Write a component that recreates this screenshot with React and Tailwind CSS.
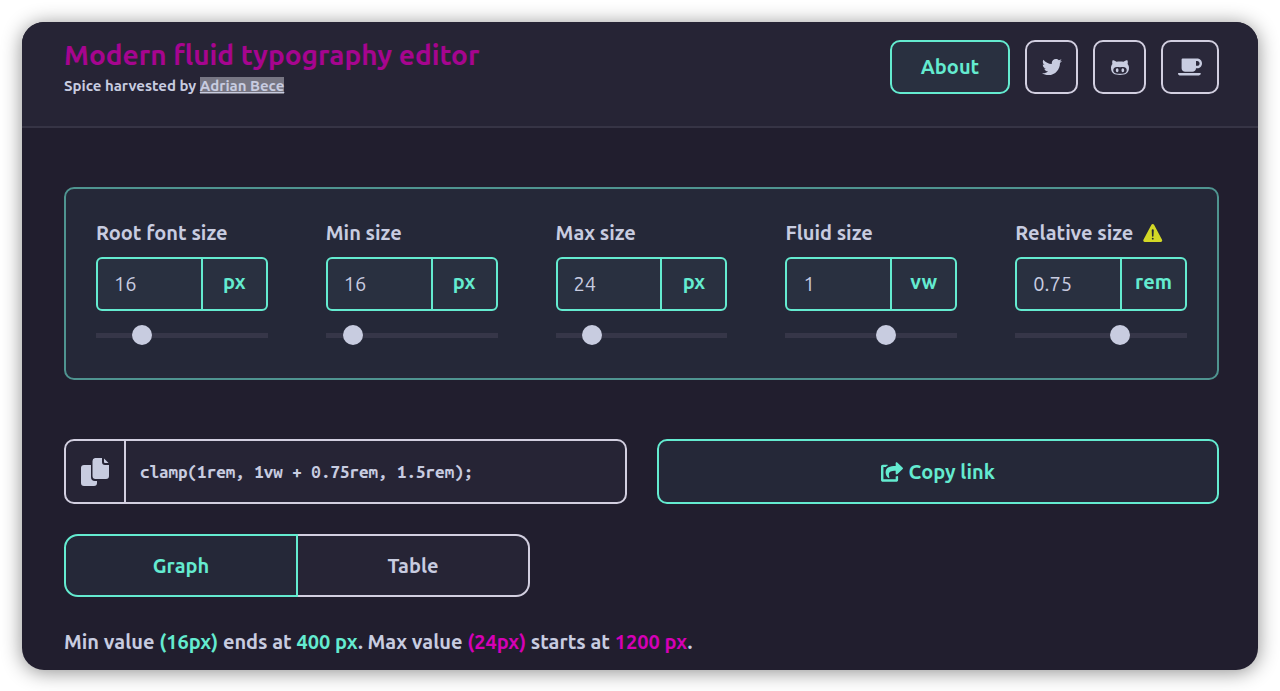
import { useState } from 'react';
import { FaTwitter, FaCoffee, FaShareSquare } from 'react-icons/fa';
import { IoWarning } from 'react-icons/io5';

const fields = [
  { id: 'root', label: 'Root font size', unit: 'px', value: 16, min: 1, max: 64 },
  { id: 'min', label: 'Min size', unit: 'px', value: 16, min: 1, max: 131 },
  { id: 'max', label: 'Max size', unit: 'px', value: 24, min: 1, max: 131 },
  { id: 'fluid', label: 'Fluid size', unit: 'vw', value: 1, min: -5, max: 5 },
  { id: 'relative', label: 'Relative size', unit: 'rem', value: 0.75, min: -3, max: 3, warning: true },
];

const OctofaceIcon = () => (
  <svg width="18" height="18" viewBox="0 0 16 16" fill="currentColor" aria-hidden="true">
    <path d="M14.7 5.34c.13-.32.55-1.59-.13-3.31 0 0-1.05-.33-3.44 1.3-1-.28-2.07-.32-3.13-.32s-2.13.04-3.13.32c-2.39-1.64-3.44-1.3-3.44-1.3-.68 1.72-.26 2.99-.13 3.31C.49 6.21 0 7.33 0 8.69 0 13.84 3.33 15 7.98 15S16 13.84 16 8.69c0-1.36-.49-2.48-1.3-3.35zM8 14.02c-3.3 0-5.98-.15-5.98-3.35 0-.76.38-1.48 1.02-2.07 1.07-.98 2.9-.46 4.96-.46 2.07 0 3.88-.52 4.96.46.65.59 1.02 1.3 1.02 2.07 0 3.19-2.68 3.35-5.98 3.35zM5.49 9.01c-.66 0-1.2.8-1.2 1.78s.54 1.79 1.2 1.79c.66 0 1.2-.8 1.2-1.79s-.54-1.78-1.2-1.78zm5.02 0c-.66 0-1.2.79-1.2 1.78s.54 1.79 1.2 1.79c.66 0 1.2-.8 1.2-1.79s-.53-1.78-1.2-1.78z" />
  </svg>
);

const CopyIcon = () => (
  <svg width="30" height="30" viewBox="0 0 30 30" fill="currentColor" aria-hidden="true">
    <path d="M4 8h7v12a4 4 0 0 0 4 4h2v2a3 3 0 0 1-3 3H4a3 3 0 0 1-3-3V11a3 3 0 0 1 3-3z" />
    <path d="M15 1h7v4a3 3 0 0 0 3 3h4v11a3 3 0 0 1-3 3H15.500a3 3 0 0 1-3-3V4a3 3 0 0 1 2.500-3z" />
    <path d="M24 1.500 28.500 6H25a1 1 0 0 1-1-1z" />
  </svg>
);

const SizeField = ({ field }) => {
  const [value, setValue] = useState(field.value);

  return (
    <div className="min-w-0">
      <label htmlFor={field.id} className="flex h-6 items-center gap-2 text-xl leading-6 font-semibold whitespace-nowrap">
        {field.label}
        {field.warning && <IoWarning className="text-[#d3d826]" size={24} />}
      </label>
      <div className="mt-3 flex h-[54px] overflow-hidden rounded-md border-2 border-[#64ebd0] bg-[#293040]">
        <input
          id={field.id}
          type="text"
          value={value}
          onChange={(e) => setValue(e.target.value)}
          className="w-0 min-w-0 flex-1 px-4 text-xl outline-none"
        />
        <span className="flex w-[65px] items-center justify-center border-l-2 border-[#64ebd0] pb-1 text-xl font-bold text-[#64ebd0]">
          {field.unit}
        </span>
      </div>
      <input
        type="range"
        aria-label={field.label}
        value={value}
        min={field.min}
        max={field.max}
        step="any"
        onChange={(e) => setValue(e.target.value)}
        className="mt-3.5 block h-5 w-full appearance-none bg-transparent [&::-webkit-slider-runnable-track]:h-[5px] [&::-webkit-slider-runnable-track]:bg-[#363648] [&::-webkit-slider-thumb]:-mt-2 [&::-webkit-slider-thumb]:size-5 [&::-webkit-slider-thumb]:appearance-none [&::-webkit-slider-thumb]:rounded-full [&::-webkit-slider-thumb]:bg-[#c8cce0]"
      />
    </div>
  );
};

const Header = () => (
  <header className="flex items-start justify-between border-b-2 border-[#363445] bg-[#262435] pt-[18px] pr-[39px] pb-7 pl-[42px]">
    <div>
      <h1 className="text-[28px] leading-[30px] font-bold text-[#a6058f]">Modern fluid typography editor</h1>
      <p className="mt-1 text-[15px] leading-6 font-semibold">
        Spice harvested by{' '}
        <a href="#" className="bg-[#777683] underline">Adrian Bece</a>
      </p>
    </div>
    <nav className="flex gap-[15px]">
      <button className="h-[54px] w-[120px] rounded-[10px] border-2 border-[#64ebd0] bg-[#293040] text-xl font-bold text-[#64ebd0]">
        About
      </button>
      <a href="#" aria-label="Twitter" className="flex h-[54px] w-[53px] items-center justify-center rounded-[10px] border-2 border-[#d2cfe0] bg-[#2a283a]">
        <FaTwitter size={20} />
      </a>
      <a href="#" aria-label="GitHub" className="flex h-[54px] w-[53px] items-center justify-center rounded-[10px] border-2 border-[#d2cfe0] bg-[#2a283a]">
        <OctofaceIcon />
      </a>
      <a href="#" aria-label="Buy me a coffee" className="flex h-[54px] w-[58px] items-center justify-center rounded-[10px] border-2 border-[#d2cfe0] bg-[#2a283a]">
        <FaCoffee size={24} />
      </a>
    </nav>
  </header>
);

export default function App() {
  return (
    <div className="p-[22px] font-['Ubuntu','Noto_Sans',sans-serif] text-[#c8cce0]">
      <div className="overflow-hidden rounded-[22px] bg-[#211e2e] shadow-[0_2px_20px_rgba(0,0,0,0.45)]">
        <Header />

        <main className="pt-[59px] pr-[39px] pb-3.5 pl-[42px]">
          {/* Size controls */}
          <section className="grid grid-cols-5 gap-[58px] rounded-[10px] border-2 border-[#4f9490] bg-[#252838] px-[30px] pt-8 pb-[33px]">
            {fields.map((field) => (
              <SizeField key={field.id} field={field} />
            ))}
          </section>

          {/* Output */}
          <div className="mt-[59px] grid grid-cols-2 gap-[30px]">
            <div className="flex h-[65px] overflow-hidden rounded-[10px] border-2 border-[#d2cfe0] bg-[#262435]">
              <button aria-label="Copy code" className="flex w-[60px] items-center justify-center border-r-2 border-[#d2cfe0]">
                <CopyIcon />
              </button>
              <code className="flex items-center px-3.5 font-['Ubuntu_Mono','DejaVu_Sans_Mono',monospace] text-[17px] font-semibold">
                clamp(1rem, 1vw + 0.75rem, 1.5rem);
              </code>
            </div>
            <button className="flex h-[65px] items-center justify-center gap-1.5 rounded-[10px] border-2 border-[#64ebd0] bg-[#252838] text-xl font-bold text-[#64ebd0]">
              <FaShareSquare size={22} />
              Copy link
            </button>
          </div>

          {/* Tabs */}
          <div role="tablist" className="mt-[30px] flex h-[63px] max-w-[466px] text-xl font-semibold">
            <button role="tab" aria-selected="true" className="flex-1 rounded-l-[14px] border-2 border-[#64ebd0] bg-[#252838] text-[#64ebd0]">
              Graph
            </button>
            <button role="tab" aria-selected="false" className="flex-1 rounded-r-[14px] border-2 border-l-0 border-[#d2cfe0] bg-[#262435]">
              Table
            </button>
          </div>

          <p className="mt-[31px] text-xl leading-7 font-semibold">
            Min value <span className="text-[#64ebd0]">(16px)</span> ends at{' '}
            <span className="text-[#64ebd0]">400 px</span>. Max value{' '}
            <span className="text-[#d400b6]">(24px)</span> starts at{' '}
            <span className="text-[#d400b6]">1200 px</span>.
          </p>
        </main>
      </div>
    </div>
  );
}
